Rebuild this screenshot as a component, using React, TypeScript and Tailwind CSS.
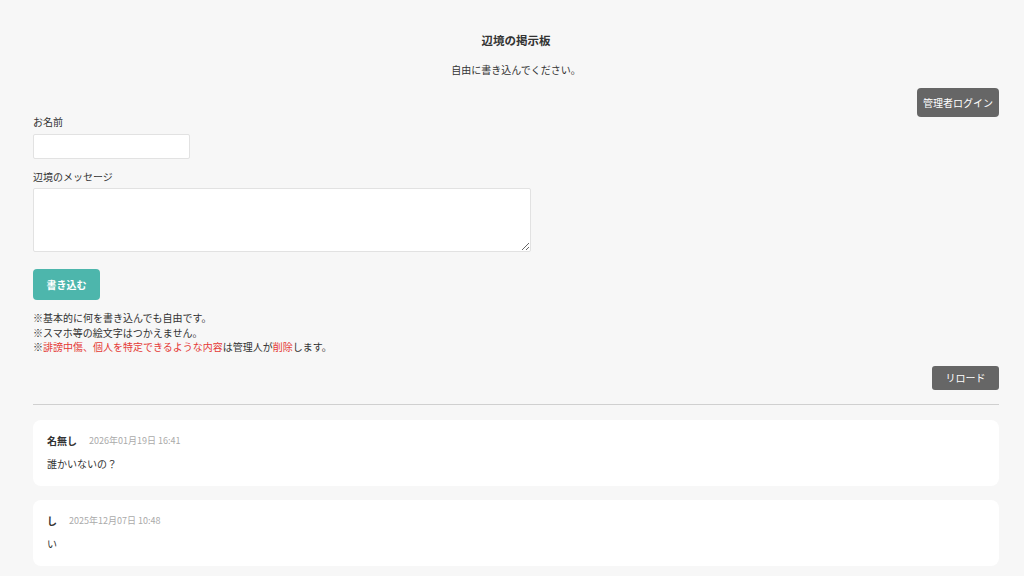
import { useState } from "react"

type Post = { name: string; date: string; body: string }

const posts: Post[] = [
  { name: "名無し", date: "2026年01月19日 16:41", body: "誰かいないの？" },
  { name: "し", date: "2025年12月07日 10:48", body: "い" },
]

export default function App() {
  const [name, setName] = useState("")
  const [message, setMessage] = useState("")

  return (
    <div
      className="min-h-screen bg-[#f7f7f7] text-[#333] pl-[33px] pr-[25px] pt-[32px] pb-6"
      style={{ fontFamily: '"Noto Sans CJK JP", "Noto Sans", sans-serif' }}
    >
      <h1 className="text-center text-[11.5px] leading-[16px] font-bold">辺境の掲示板</h1>
      <p className="mt-[14px] text-center text-[10px] leading-[16px]">自由に書き込んでください。</p>

      {/* name label + admin login */}
      <div className="mt-[10px] flex items-start justify-between">
        <label className="mt-[27px] text-[10px] leading-[14px]">お名前</label>
        <button className="h-[29px] w-[82px] rounded-[4px] bg-[#666] text-[10px] text-white">
          管理者ログイン
        </button>
      </div>
      <input
        value={name}
        onChange={(e) => setName(e.target.value)}
        className="mt-[5px] block h-[25px] w-[157px] rounded-[2px] border border-[#e2e2e2] bg-white px-2 text-[10px] outline-none"
      />

      <label className="mt-[11px] block text-[10px] leading-[14px]">辺境のメッセージ</label>
      <textarea
        value={message}
        onChange={(e) => setMessage(e.target.value)}
        className="mt-[4px] block h-[64px] w-[498px] rounded-[2px] border border-[#e2e2e2] bg-white px-2 py-1 text-[10px] outline-none"
      />

      <button className="mt-[17px] h-[31px] w-[67px] rounded-[4px] bg-[#4db6ac] text-[10px] font-bold text-white">
        書き込む
      </button>

      <div className="mt-[11px] text-[10px] leading-[14.5px]">
        <p>※基本的に何を書き込んでも自由です。</p>
        <p>※スマホ等の絵文字はつかえません。</p>
        <p>
          ※<span className="text-[#e53935]">誹謗中傷、個人を特定できるような内容</span>は管理人が
          <span className="text-[#e53935]">削除</span>します。
        </p>
      </div>

      <div className="mt-[11px] flex justify-end">
        <button className="h-[24px] w-[67px] rounded-[3px] bg-[#666] text-[10px] text-white">リロード</button>
      </div>

      <hr className="mt-[14px] border-t border-[#d0d0d0]" />

      <div className="mt-[15px] flex flex-col gap-[14px]">
        {posts.map((p) => (
          <div key={p.date} className="rounded-[8px] bg-white px-[14px] pt-[14px] pb-[15px]">
            <div className="flex items-center gap-[12px] leading-[14px]">
              <span className="text-[10px] font-bold">{p.name}</span>
              <span className="text-[9px] text-[#aaa]">{p.date}</span>
            </div>
            <p className="mt-[9px] text-[10px] leading-[14px]">{p.body}</p>
          </div>
        ))}
      </div>
    </div>
  )
}
